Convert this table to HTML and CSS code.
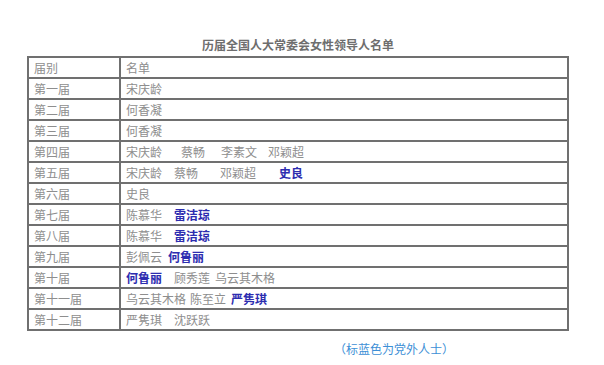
FILE: index.html
```html
<!DOCTYPE html>
<html lang="zh">
<head>
<meta charset="utf-8">
<link rel="stylesheet" href="styles.css">
</head>
<body>
<div class="page">
  <div class="title">历届全国人大常委会女性领导人名单</div>
  <table class="list">
    <tr><td class="c1">届别</td><td class="c2">名单</td></tr>
    <tr><td class="c1">第一届</td><td class="c2">宋庆龄</td></tr>
    <tr><td class="c1">第二届</td><td class="c2">何香凝</td></tr>
    <tr><td class="c1">第三届</td><td class="c2">何香凝</td></tr>
    <tr><td class="c1">第四届</td><td class="c2"><span>宋庆龄</span><span class="g19">蔡畅</span><span class="g16">李素文</span><span class="g11">邓颖超</span></td></tr>
    <tr><td class="c1">第五届</td><td class="c2"><span>宋庆龄</span><span class="g12">蔡畅</span><span class="g22">邓颖超</span><span class="g23 blue">史良</span></td></tr>
    <tr><td class="c1">第六届</td><td class="c2">史良</td></tr>
    <tr><td class="c1">第七届</td><td class="c2"><span>陈慕华</span><span class="g12 blue">雷洁琼</span></td></tr>
    <tr><td class="c1">第八届</td><td class="c2"><span>陈慕华</span><span class="g12 blue">雷洁琼</span></td></tr>
    <tr><td class="c1">第九届</td><td class="c2"><span>彭佩云</span><span class="g6 blue">何鲁丽</span></td></tr>
    <tr><td class="c1">第十届</td><td class="c2"><span class="blue">何鲁丽</span><span class="g12">顾秀莲</span><span class="g5">乌云其木格</span></td></tr>
    <tr><td class="c1">第十一届</td><td class="c2"><span>乌云其木格</span><span class="g4">陈至立</span><span class="g5 blue">严隽琪</span></td></tr>
    <tr><td class="c1">第十二届</td><td class="c2"><span>严隽琪</span><span class="g12">沈跃跃</span></td></tr>
  </table>
  <div class="note">（标蓝色为党外人士）</div>
</div>
</body>
</html>
```

FILE: styles.css
```css
html, body {
  margin: 0;
  padding: 0;
  background: #ffffff;
}
body {
  font-family: "Noto Sans CJK SC", "Noto Sans", sans-serif;
  font-size: 12px;
  color: #8e8e8e;
}
.page {
  padding-top: 36px;
  padding-left: 27px;
}
.title {
  width: 542px;
  text-align: center;
  font-weight: bold;
  color: #6e6e6e;
  height: 18px;
  line-height: 18px;
  font-size: 12px;
  margin-bottom: 2px;
}
.list {
  border-collapse: collapse;
  width: 542px;
  table-layout: fixed;
}
.list td {
  border: 2px solid #707070;
  height: 19px;
  padding: 0 0 0 5px;
  line-height: 19px;
  white-space: nowrap;
  vertical-align: middle;
}
.list td.c1 {
  width: 85px;
}
.list td.c2 {
  padding-left: 5px;
}
.blue {
  color: #2d2db0;
  font-weight: bold;
}
.g4 { margin-left: 4px; }
.g5 { margin-left: 5px; }
.g6 { margin-left: 6px; }
.g11 { margin-left: 11px; }
.g12 { margin-left: 12px; }
.g16 { margin-left: 16px; }
.g19 { margin-left: 19px; }
.g22 { margin-left: 22px; }
.g23 { margin-left: 23px; }
.note {
  margin-top: 9px;
  padding-left: 307px;
  color: #3d8fd6;
  height: 18px;
  line-height: 18px;
}
```
